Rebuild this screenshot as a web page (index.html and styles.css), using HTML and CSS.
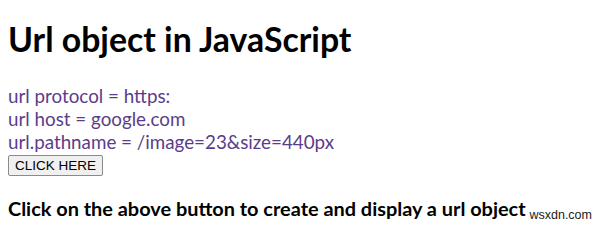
FILE: index.html
```html
<!DOCTYPE html>
<html>
<head>
	<title>Url object in JavaScript</title>
	<meta charset="utf-8">
	<link rel="stylesheet" href="styles.css">
</head>
<body>
<h1>Url object in JavaScript</h1>
<div class="result">url protocol = https:<br>url host = google.com<br>url.pathname = /image=23&amp;size=440px</div>
<button class="btn">CLICK HERE</button>
<h3>Click on the above button to create and display a url object</h3>
<span class="mark">wsxdn.com</span>
</body>
</html>
```
FILE: styles.css
```css
body {
	margin:8px;
	font-family: Lato, "Open Sans", sans-serif;
	color:black;
	background:white;
}
h1 {
	font-size:33.8px;
	font-weight:bold;
	margin:13px 0 26px;
	line-height:37px;
}
.result {
	font-size:18.8px;
	color:#5a3d8a;
	line-height:23px;
}
.btn {
	font-family: "Liberation Sans", Arial, sans-serif;
	font-size:13.5px;
	padding:2px 6px;
	margin:2px 0 0;
	border:1px solid #8a8a8a;
	border-radius:2px;
	background:#f0f0f0;
	color:black;
}
h3 {
	font-size:19.9px;
	margin:21px 0 0;
	line-height:22px;
}
.mark {
	position:absolute;
	right:8px;
	bottom:5px;
	font-family: "Liberation Sans", Arial, sans-serif;
	font-size:12.5px;
	color:#222;
}
```
